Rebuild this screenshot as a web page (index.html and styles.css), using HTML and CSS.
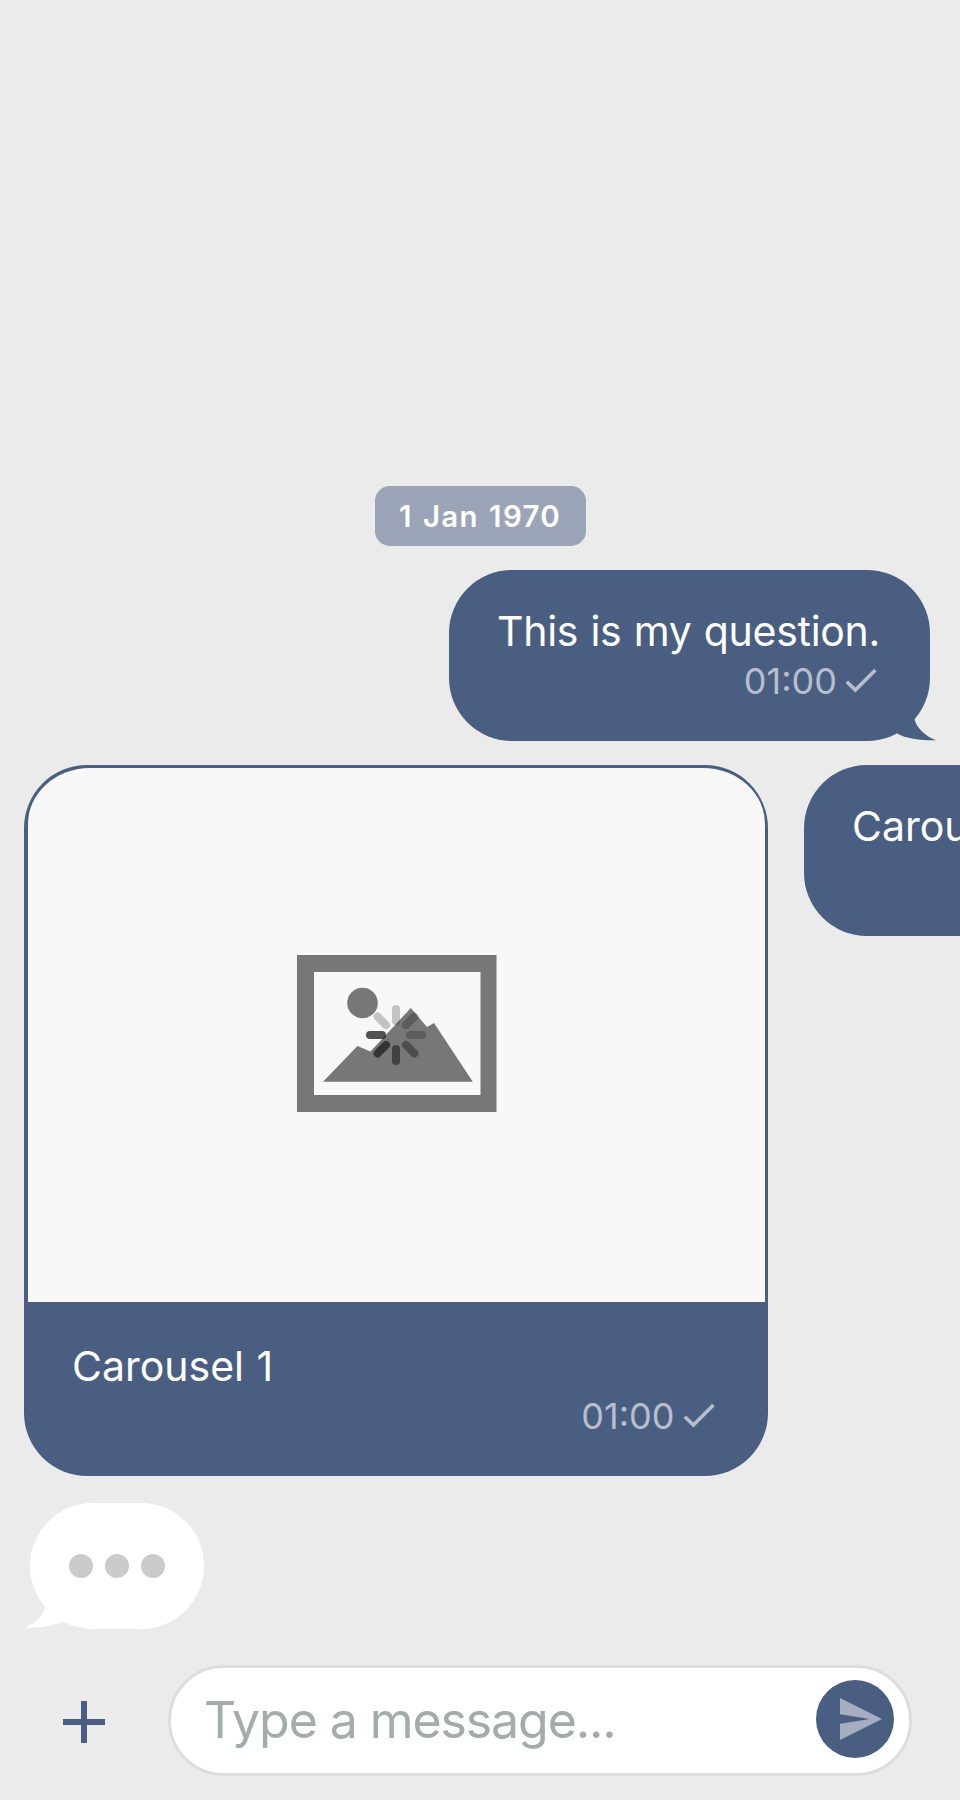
FILE: index.html
```html
<!DOCTYPE html>
<html lang="en">
<head>
<meta charset="utf-8">
<title>Chat</title>
<link rel="stylesheet" href="styles.css">
</head>
<body>
<main class="chat">
  <section class="messages">
    <div class="date"><span class="date-text">1 Jan 1970</span></div>

    <div class="bubble sent">
      <p class="text question">This is my question.</p>
      <div class="meta"><span class="time">01:00</span><svg class="check" viewBox="0 0 32 26"><path d="M1.8 13.8 L10.4 22 L30.4 2" /></svg></div>
      <svg class="tail-right" viewBox="0 0 44 30"><path d="M22 0 L22.7 9 C25 17 33 25 44 29.3 C29 29.5 14 27.500 5.300 22.400 L0 10 Z" /></svg>
    </div>

    <div class="carousel">
      <article class="card">
        <div class="picture">
          <svg class="placeholder" viewBox="0 0 200 158">
            <path class="gray" fill-rule="evenodd" d="M0 0H199.500V157H0ZM17 17V140H183.500V17Z" />
            <circle class="gray" cx="65.500" cy="48" r="15.300" />
            <path class="gray" d="M26 126.700 L60.500 91 L73.500 96.500 L113.800 53 L130 72 L137 68 L175.800 126.700Z" />
            <g class="spinner" transform="translate(99 80)">
              <path d="M0 -14V-26" stroke-opacity=".21" />
              <path d="M0 -14V-26" stroke-opacity=".22" transform="rotate(45)" />
              <path d="M0 -14V-26" stroke-opacity=".22" transform="rotate(90)" />
              <path d="M0 -14V-26" stroke-opacity=".35" transform="rotate(135)" />
              <path d="M0 -14V-26" stroke-opacity=".44" transform="rotate(180)" />
              <path d="M0 -14V-26" stroke-opacity=".57" transform="rotate(225)" />
              <path d="M0 -14V-26" stroke-opacity=".67" transform="rotate(270)" />
              <path d="M0 -14V-26" stroke-opacity=".21" transform="rotate(315)" />
            </g>
          </svg>
        </div>
        <div class="caption">
          <p class="text">Carousel 1</p>
          <div class="meta"><span class="time">01:00</span><svg class="check" viewBox="0 0 32 26"><path d="M1.8 13.8 L10.4 22 L30.4 2" /></svg></div>
        </div>
      </article>
      <article class="bubble next">
        <p class="text">Carousel 2</p>
      </article>
    </div>

    <div class="typing">
      <i class="dot"></i><i class="dot"></i><i class="dot"></i>
      <svg class="tail-left" viewBox="0 0 44 30"><path d="M22 0 L21.300 8.500 C19 17 11 24.500 0 28.800 C15 29 30 27 38.700 22.400 L44 10 Z" /></svg>
    </div>
  </section>

  <footer class="composer">
    <svg class="plus" viewBox="0 0 42 42"><path d="M18 0h6v18h18v6H24v18h-6V24H0v-6h18z" /></svg>
    <div class="field">
      <span class="hint">Type a message...</span>
      <div class="send"><svg class="plane" viewBox="0 0 42 42"><path d="M0 0 L42 21 L0 42 V25.700 L30 21 L0 16.200Z" /></svg></div>
    </div>
  </footer>
</main>
</body>
</html>
```
FILE: styles.css
```css
* { box-sizing: border-box; }
body {
  margin: 0;
  background: #ebebeb;
  font-family: Inter, "Liberation Sans", sans-serif;
}
svg { display: block; flex: none; }
p { margin: 0; }

.chat {
  display: flex;
  flex-direction: column;
  height: 1800px;
  width: 960px;
  overflow: hidden;
}
.messages {
  flex: 1;
  display: flex;
  flex-direction: column;
  justify-content: flex-end;
  padding: 0 24px 36px;
}
.date {
  align-self: center;
  width: 211px;
  height: 60px;
  margin-bottom: 24px;
  border-radius: 15px;
  background: #9ba3b6;
  color: #fff;
  display: flex;
  align-items: center;
  justify-content: center;
}
.date-text {
  font-size: 29.5px;
  font-weight: 600;
  letter-spacing: 1.3px;
  word-spacing: 1.5px;
  line-height: 60px;
  white-space: nowrap;
}
.bubble {
  position: relative;
  height: 171px;
  border-radius: 63px;
  background: #4a5e81;
  padding: 36px 50px 0 48px;
}
.sent {
  align-self: flex-end;
  width: 481px;
  margin-right: 6px;
  margin-bottom: 24px;
}
.text {
  font-size: 41px;
  line-height: 50px;
  font-weight: 400;
  word-spacing: 1px;
  color: #fff;
  white-space: nowrap;
}
.question { letter-spacing: -0.28px; }
.meta {
  display: flex;
  justify-content: flex-end;
  align-items: center;
  gap: 8px;
  height: 50px;
  padding-right: 3px;
}
.time {
  font-size: 36px;
  line-height: 50px;
  color: #b7becd;
}
.check { width: 32px; height: 26px; }
.check path { fill: none; stroke: #b7becd; stroke-width: 3.6; }
.tail-right {
  position: absolute;
  right: -6px;
  bottom: 0;
  width: 44px;
  height: 30px;
  fill: #4a5e81;
}
.carousel {
  display: flex;
  align-items: flex-start;
  gap: 36px;
  margin-bottom: 27px;
}
.card {
  flex: none;
  width: 744px;
  height: 711px;
  border-radius: 63px;
  background: #4a5e81;
  padding: 3px 3.5px 0 4px;
}
.picture {
  height: 534px;
  background: #f8f8f8;
  border-radius: 62px 62px 0 0 / 56px 56px 0 0;
  padding: 187px 0 0 269px;
}
.placeholder { width: 200px; height: 158px; }
.gray { fill: #777; }
.spinner { stroke: #000; stroke-width: 8; stroke-linecap: round; }
.caption { padding: 39px 47px 0 44px; }
.next {
  flex: none;
  width: 744px;
}
.typing {
  position: relative;
  width: 174px;
  height: 126px;
  margin-left: 6px;
  border-radius: 63px;
  background: #fff;
  display: flex;
  align-items: center;
  gap: 12px;
  padding-left: 39px;
}
.dot {
  width: 24px;
  height: 24px;
  border-radius: 50%;
  background: #cbcbcb;
}
.tail-left {
  position: absolute;
  left: -6px;
  bottom: 0;
  width: 44px;
  height: 30px;
  fill: #fff;
}
.composer {
  display: flex;
  align-items: flex-start;
  gap: 63px;
  height: 135px;
  padding-left: 63px;
}
.plus {
  width: 42px;
  height: 42px;
  margin-top: 36px;
  fill: #4a5e81;
}
.field {
  width: 744px;
  height: 111px;
  border: 3px solid #ddd;
  border-radius: 56px;
  background: #fff;
  display: flex;
  justify-content: space-between;
  padding: 12px 15px 0 33px;
}
.hint {
  font-size: 50px;
  line-height: 80px;
  letter-spacing: -1.08px;
  color: #a3abab;
  white-space: nowrap;
}
.send {
  width: 78px;
  height: 78px;
  border-radius: 50%;
  background: #4a5e81;
  padding: 18px 0 0 24px;
}
.plane { width: 42px; height: 42px; fill: #a5aec1; }
```
